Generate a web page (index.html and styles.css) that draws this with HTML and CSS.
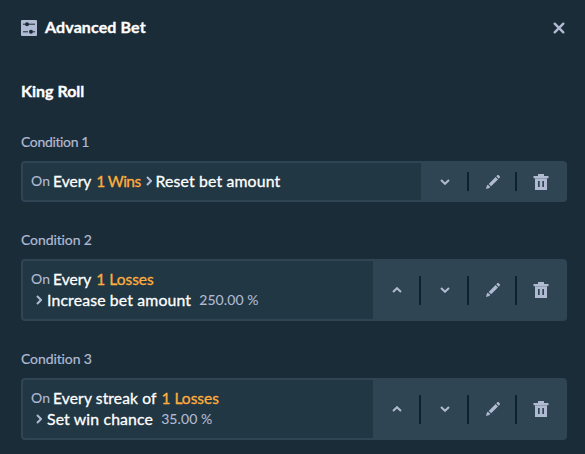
FILE: index.html
```
<!DOCTYPE html>
<html lang="en">
<head>
    <meta charset="UTF-8">
    <meta name="viewport" content="width=device-width, initial-scale=1.0">
    <title>Advanced Bet</title>
    <link rel="stylesheet" href="styles.css">
</head>
<body>
    <!-- shared icons -->
    <svg class="icon-defs" width="0" height="0">
        <symbol id="icon-up" viewBox="0 0 10 6">
            <path d="M1 5l4-3.8L9 5" fill="none" stroke="currentColor" stroke-width="2"/>
        </symbol>
        <symbol id="icon-down" viewBox="0 0 10 6">
            <path d="M1 1l4 3.8L9 1" fill="none" stroke="currentColor" stroke-width="2"/>
        </symbol>
        <symbol id="icon-right" viewBox="0 0 6 10">
            <path d="M1 1l4 4-4 4" fill="none" stroke="currentColor" stroke-width="2"/>
        </symbol>
        <symbol id="icon-edit" viewBox="0 0 14 14">
            <path d="M0 14l.9-3.4 1-.9 2.4 2.4-1 1zM2.7 8.9l6.9-6.9 2.4 2.4-6.9 6.9zM10.3 1.3L11.5.1h1L13.9 1.5v1l-1.2 1.2z" fill="currentColor"/>
        </symbol>
        <symbol id="icon-trash" viewBox="0 0 16 16">
            <path d="M5 0h6v2h4.5v2.2H.5V2H5zM2 4h12v12H2zM5 7v6h1.7V7zM9.3 7v6H11V7z" fill="currentColor" fill-rule="evenodd"/>
        </symbol>
    </svg>

    <div class="modal">
        <div class="modal-header">
            <svg class="header-icon" viewBox="0 0 16 16">
                <rect width="16" height="16" rx="1" fill="#b1bad3"/>
                <path d="M2 4.2h7M9 4.2h5M2 11.8h5M12 11.8h2" stroke="#1a2c38" stroke-width="1"/>
                <circle cx="6" cy="4.2" r="2" fill="#1a2c38"/>
                <circle cx="10" cy="11.8" r="2" fill="#1a2c38"/>
            </svg>
            <h1>Advanced Bet</h1>
            <button class="close-button" aria-label="Close">
                <svg width="12" height="12" viewBox="0 0 12 12">
                    <path d="M1.7 1.7l8.6 8.6M10.3 1.7l-8.6 8.6" stroke="currentColor" stroke-width="2.4" stroke-linecap="round"/>
                </svg>
            </button>
        </div>

        <h2>King Roll</h2>

        <div class="condition">
            <div class="condition-label first">Condition 1</div>
            <div class="condition-card">
                <div class="condition-text">
                    <div class="line">
                        <span class="muted">On</span>
                        <span>Every</span>
                        <span class="highlight wins">1 Wins</span>
                        <svg class="arrow inline"><use href="#icon-right"/></svg>
                        <span class="effect">Reset bet amount</span>
                    </div>
                </div>
                <div class="actions">
                    <button aria-label="Move down"><svg class="chevron"><use href="#icon-down"/></svg></button>
                    <button aria-label="Edit"><svg class="edit"><use href="#icon-edit"/></svg></button>
                    <button aria-label="Delete"><svg class="trash"><use href="#icon-trash"/></svg></button>
                </div>
            </div>
        </div>

        <div class="condition">
            <div class="condition-label">Condition 2</div>
            <div class="condition-card">
                <div class="condition-text">
                    <div class="line">
                        <span class="muted">On</span>
                        <span>Every</span>
                        <span class="highlight">1 Losses</span>
                    </div>
                    <div class="line">
                        <svg class="arrow"><use href="#icon-right"/></svg>
                        <span class="effect">Increase bet amount</span>
                        <span class="muted value">250.00 %</span>
                    </div>
                </div>
                <div class="actions">
                    <button aria-label="Move up"><svg class="chevron"><use href="#icon-up"/></svg></button>
                    <button aria-label="Move down"><svg class="chevron"><use href="#icon-down"/></svg></button>
                    <button aria-label="Edit"><svg class="edit"><use href="#icon-edit"/></svg></button>
                    <button aria-label="Delete"><svg class="trash"><use href="#icon-trash"/></svg></button>
                </div>
            </div>
        </div>

        <div class="condition">
            <div class="condition-label">Condition 3</div>
            <div class="condition-card">
                <div class="condition-text">
                    <div class="line">
                        <span class="muted">On</span>
                        <span class="streak">Every streak of</span>
                        <span class="highlight">1 Losses</span>
                    </div>
                    <div class="line">
                        <svg class="arrow"><use href="#icon-right"/></svg>
                        <span class="effect">Set win chance</span>
                        <span class="muted value">35.00 %</span>
                    </div>
                </div>
                <div class="actions">
                    <button aria-label="Move up"><svg class="chevron"><use href="#icon-up"/></svg></button>
                    <button aria-label="Move down"><svg class="chevron"><use href="#icon-down"/></svg></button>
                    <button aria-label="Edit"><svg class="edit"><use href="#icon-edit"/></svg></button>
                    <button aria-label="Delete"><svg class="trash"><use href="#icon-trash"/></svg></button>
                </div>
            </div>
        </div>
    </div>
</body>
</html>
```
FILE: styles.css
```
* {
    margin: 0;
    padding: 0;
    box-sizing: border-box;
}

body {
    font-family: Lato, "Liberation Sans", sans-serif;
    background: #1a2c38;
    color: #ffffff;
    height: 100vh;
    overflow: hidden;
}

button {
    background: none;
    border: none;
    color: #b1bad3;
    cursor: pointer;
}

.icon-defs {
    position: absolute;
}

.modal {
    padding: 16px 18px 0 21px;
}

.modal-header {
    display: flex;
    align-items: center;
    height: 24px;
}

.header-icon {
    width: 16px;
    height: 16px;
    margin-right: 8px;
}

h1,
h2 {
    font-size: 16px;
    font-weight: 700;
    line-height: 24px;
    -webkit-text-stroke: 0.35px currentColor;
}

h1 {
    letter-spacing: 0.12px;
    padding-bottom: 2px;
}

.close-button {
    display: flex;
    margin-left: auto;
    margin-right: 2px;
}

h2 {
    margin-top: 39px;
}

.condition {
    margin-top: 28px;
}

.condition-label {
    color: #b1bad3;
    font-size: 14px;
    line-height: 21px;
    letter-spacing: -0.1px;
    margin-bottom: 9px;
    -webkit-text-stroke: 0.2px currentColor;
}

.condition + .condition {
    margin-top: 27px;
}

.condition-label.first {
    letter-spacing: -0.35px;
}

.condition-card {
    display: flex;
    background: #2f4553;
    border: 2px solid #2f4553;
    border-radius: 4px;
}

.condition-text {
    flex: 1;
    background: #213743;
    border-radius: 2px 0 0 2px;
    padding: 8px;
}

.line {
    display: flex;
    align-items: center;
    height: 21px;
    font-size: 15.5px;
    line-height: 21px;
    white-space: nowrap;
    gap: 4px;
    -webkit-text-stroke: 0.3px currentColor;
}

.muted {
    color: #b1bad3;
    font-size: 14px;
    letter-spacing: 0.1px;
    padding-bottom: 2px;
    -webkit-text-stroke: 0.1px currentColor;
}

.line .muted:first-child {
    margin-right: -1px;
}

.highlight {
    color: #ffae3d;
    margin-left: 1px;
}

.highlight.wins {
    letter-spacing: -0.6px;
}

.effect {
    font-size: 15.8px;
    letter-spacing: 0.15px;
    padding-bottom: 2px;
}

.streak {
    letter-spacing: 0.15px;
}

.arrow {
    width: 6px;
    height: 10px;
    margin-left: 5px;
    margin-right: 1px;
    margin-bottom: 2px;
    color: #b1bad3;
}

.arrow.inline {
    margin-left: 1px;
    margin-right: 0;
}

.value {
    margin-left: 4px;
}

.actions {
    display: flex;
    align-items: center;
}

.actions button {
    display: flex;
    align-items: center;
    justify-content: center;
    width: 48px;
    height: 50%;
    padding-left: 2px;
    border-right: 2px solid #0f212e;
}

.actions button:last-child {
    border-right-color: transparent;
}

.chevron {
    width: 10px;
    height: 6px;
}

.edit {
    width: 14px;
    height: 14px;
}

.trash {
    width: 16px;
    height: 16px;
}
```
